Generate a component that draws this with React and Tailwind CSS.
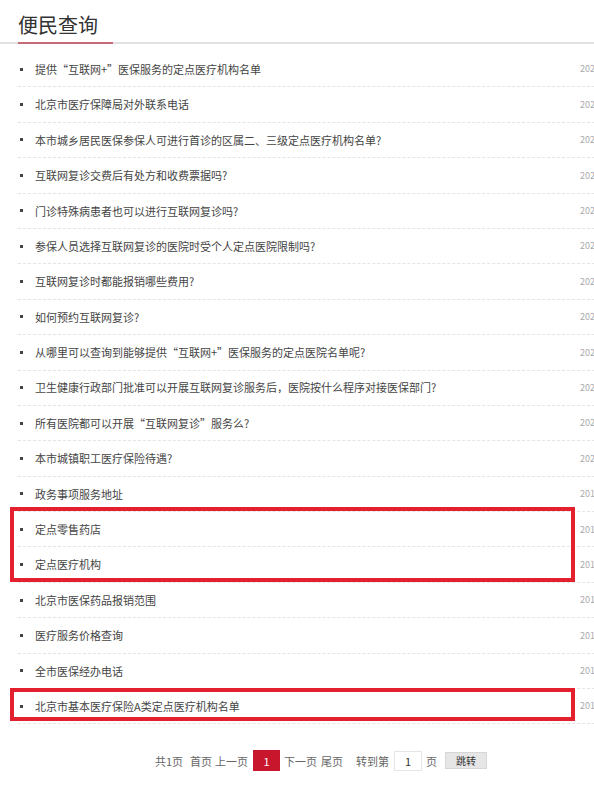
import React from "react";

// List rows shown on the page. Dates run past the right edge of the window.
const ITEMS = [
  { title: "提供“互联网+”医保服务的定点医疗机构名单", date: "2020-06-17" },
  { title: "北京市医疗保障局对外联系电话", date: "2020-05-29" },
  { title: "本市城乡居民医保参保人可进行首诊的区属二、三级定点医疗机构名单?", date: "2020-04-03" },
  { title: "互联网复诊交费后有处方和收费票据吗?", date: "2020-03-27" },
  { title: "门诊特殊病患者也可以进行互联网复诊吗?", date: "2020-03-27" },
  { title: "参保人员选择互联网复诊的医院时受个人定点医院限制吗?", date: "2020-03-27" },
  { title: "互联网复诊时都能报销哪些费用?", date: "2020-03-27" },
  { title: "如何预约互联网复诊?", date: "2020-03-27" },
  { title: "从哪里可以查询到能够提供“互联网+”医保服务的定点医院名单呢?", date: "2020-03-27" },
  { title: "卫生健康行政部门批准可以开展互联网复诊服务后，医院按什么程序对接医保部门?", date: "2020-03-27" },
  { title: "所有医院都可以开展“互联网复诊”服务么?", date: "2020-03-27" },
  { title: "本市城镇职工医疗保险待遇?", date: "2020-01-15" },
  { title: "政务事项服务地址", date: "2019-12-20" },
  { title: "定点零售药店", date: "2019-12-20" },
  { title: "定点医疗机构", date: "2019-12-20" },
  { title: "北京市医保药品报销范围", date: "2019-12-20" },
  { title: "医疗服务价格查询", date: "2019-12-20" },
  { title: "全市医保经办电话", date: "2019-12-20" },
  { title: "北京市基本医疗保险A类定点医疗机构名单", date: "2019-12-20" },
];

export default function App() {
  return (
    <div
      className="relative h-[792px] w-[594px] overflow-hidden bg-white"
      style={{ fontFamily: '"Noto Sans CJK SC", "Noto Sans", sans-serif' }}
    >
      <div className="w-[640px]">
        {/* Heading */}
        <div className="pl-[18px] pt-[10px]">
          <h2 className="text-[20px] leading-[30px] text-[#333]">便民查询</h2>
        </div>
        <div className="mt-[2px] flex h-[2px]">
          <div className="w-[18px] bg-[#e2e2e2]" />
          <div className="w-[95px] bg-[#c46a78]" />
          <div className="flex-1 bg-[#e2e2e2]" />
        </div>

        {/* List */}
        <ul className="mt-[8px] pl-[18px]">
          {ITEMS.map((item) => (
            <li
              key={item.title}
              className="flex h-[35.4px] items-center border-b border-dashed border-[#e4e4e4] text-[11px] text-[#444]"
            >
              <span className="ml-[2px] mr-[12px] h-[3px] w-[3px] bg-[#444]" />
              <span className="flex-1">{item.title}</span>
              <span className="w-[60px] text-[9px] text-[#aaa]">{item.date}</span>
            </li>
          ))}
        </ul>

        {/* Pagination */}
        <div className="mt-[26px] flex items-center pl-[155px] text-[11px] text-[#666]">
          <span>共1页</span>
          <span className="ml-[7px]">首页</span>
          <span className="ml-[3px]">上一页</span>
          <span className="ml-[5px] flex h-[21px] w-[27px] items-center justify-center bg-[#c8172d] text-white">1</span>
          <span className="ml-[4px]">下一页</span>
          <span className="ml-[4px]">尾页</span>
          <span className="ml-[13px]">转到第</span>
          <span className="ml-[5px] flex h-[20px] w-[28px] items-center justify-center border border-[#e5e5e5] text-[#333]">1</span>
          <span className="ml-[4px]">页</span>
          <button className="ml-[8px] h-[17px] w-[42px] border border-[#d6d6d6] bg-[#e6e6e6] text-[10px] text-[#333]">
            跳转
          </button>
        </div>
      </div>

      {/* Annotation boxes */}
      <div className="absolute left-[10px] top-[507px] h-[75px] w-[565px] border-4 border-[#e3202e]" />
      <div className="absolute left-[10px] top-[688px] h-[33px] w-[565px] border-4 border-[#e3202e]" />
    </div>
  );
}
